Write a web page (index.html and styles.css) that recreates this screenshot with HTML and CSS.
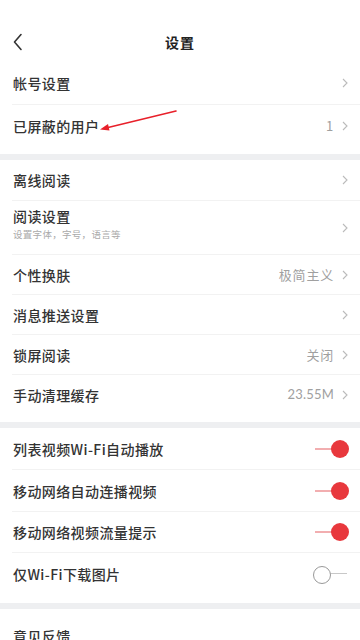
FILE: index.html
```html
<!DOCTYPE html>
<html lang="zh">
<head>
<meta charset="utf-8">
<link rel="stylesheet" href="styles.css">
</head>
<body>
<div class="page">
  <header class="header">
    <svg class="back" width="12" height="18" viewBox="0 0 12 18"><polyline points="9,1.5 2.5,9 9,16.5" fill="none" stroke="#333" stroke-width="1.6" stroke-linejoin="round" stroke-linecap="round"/></svg>
    <h1 class="title">设置</h1>
  </header>

  <section class="section s1">
    <div class="row h42"><span class="label">帐号设置</span><span class="right"><svg class="chev" width="6" height="10" viewBox="0 0 6 10"><polyline points="1,1 5,5 1,9" fill="none" stroke="#bbb" stroke-width="1.1"/></svg></span></div>
    <div class="row h42 blocked"><span class="label">已屏蔽的用户</span><span class="right"><span class="val">1</span><svg class="chev" width="6" height="10" viewBox="0 0 6 10"><polyline points="1,1 5,5 1,9" fill="none" stroke="#bbb" stroke-width="1.1"/></svg></span>
      <svg class="annot" width="80" height="24" viewBox="0 0 80 24"><line x1="78" y1="1" x2="8" y2="18" stroke="#e8202a" stroke-width="1.6" stroke-linecap="round"/><polygon points="2,19.5 10,14 11.5,20.5" fill="#e8202a"/></svg>
    </div>
  </section>
  <div class="band"></div>

  <section class="section s2">
    <div class="row h40"><span class="label">离线阅读</span><span class="right"><svg class="chev" width="6" height="10" viewBox="0 0 6 10"><polyline points="1,1 5,5 1,9" fill="none" stroke="#bbb" stroke-width="1.1"/></svg></span></div>
    <div class="row h54"><span class="stack"><span class="label">阅读设置</span><span class="sub">设置字体，字号，语言等</span></span><span class="right"><svg class="chev" width="6" height="10" viewBox="0 0 6 10"><polyline points="1,1 5,5 1,9" fill="none" stroke="#bbb" stroke-width="1.1"/></svg></span></div>
    <div class="row h40"><span class="label">个性换肤</span><span class="right"><span class="val">极简主义</span><svg class="chev" width="6" height="10" viewBox="0 0 6 10"><polyline points="1,1 5,5 1,9" fill="none" stroke="#bbb" stroke-width="1.1"/></svg></span></div>
    <div class="row h40"><span class="label">消息推送设置</span><span class="right"><svg class="chev" width="6" height="10" viewBox="0 0 6 10"><polyline points="1,1 5,5 1,9" fill="none" stroke="#bbb" stroke-width="1.1"/></svg></span></div>
    <div class="row h40"><span class="label">锁屏阅读</span><span class="right"><span class="val">关闭</span><svg class="chev" width="6" height="10" viewBox="0 0 6 10"><polyline points="1,1 5,5 1,9" fill="none" stroke="#bbb" stroke-width="1.1"/></svg></span></div>
    <div class="row h40"><span class="label">手动清理缓存</span><span class="right"><span class="val latin">23.55M</span><svg class="chev" width="6" height="10" viewBox="0 0 6 10"><polyline points="1,1 5,5 1,9" fill="none" stroke="#bbb" stroke-width="1.1"/></svg></span></div>
  </section>
  <div class="band"></div>

  <section class="section s3">
    <div class="row h41"><span class="label">列表视频Wi-Fi自动播放</span><span class="toggle on"></span></div>
    <div class="row h42"><span class="label">移动网络自动连播视频</span><span class="toggle on"></span></div>
    <div class="row h41"><span class="label">移动网络视频流量提示</span><span class="toggle on"></span></div>
    <div class="row h42"><span class="label">仅Wi-Fi下载图片</span><span class="toggle off"></span></div>
  </section>
  <div class="band"></div>

  <section class="section s4">
    <div class="row h54"><span class="label">意见反馈</span></div>
  </section>
</div>
</body>
</html>
```

FILE: styles.css
```css
* { box-sizing: border-box; }
html, body { margin: 0; padding: 0; background: #fff; }
body {
  font-family: "Noto Sans CJK SC", "Noto Sans", sans-serif;
  color: #333;
  width: 360px;
  height: 640px;
  overflow: hidden;
}
.page { width: 360px; }

.header {
  height: 62px;
  position: relative;
  display: flex;
  align-items: flex-start;
  justify-content: center;
  padding-top: 35px;
}
.back { position: absolute; left: 12px; top: 33px; }
.title {
  margin: 0;
  font-size: 14px;
  font-weight: 700;
  letter-spacing: 1px;
  color: #222;
  line-height: 1;
}

.section { background: #fff; }
.s1, .s2 { padding-bottom: 8px; }
.s3 { padding-bottom: 9px; }

.band { height: 6px; background: #eeeff1; }

.row {
  display: flex;
  align-items: center;
  justify-content: space-between;
  margin-left: 12px;
  padding-left: 1px;
  padding-right: 12px;
  border-top: 1px solid #f2f2f2;
  position: relative;
}
.section > .row:first-child { border-top: none; }
.h40 { height: 40px; }
.h41 { height: 41px; }
.h42 { height: 42px; }
.h54 { height: 54px; }

.label {
  font-size: 14px;
  font-weight: 500;
  letter-spacing: 0.4px;
  color: #333;
  line-height: 1;
}
.stack { display: flex; flex-direction: column; gap: 7px; padding-bottom: 6px; }
.sub { font-size: 9.5px; color: #aaa; letter-spacing: 0.3px; line-height: 1; }

.right { display: flex; align-items: center; gap: 8px; }
.val { font-size: 13px; color: #a0a0a0; letter-spacing: 0.8px; line-height: 1; }
.val.latin { font-family: "Lato", "Liberation Sans", sans-serif; font-size: 13px; letter-spacing: 0.2px; }
.chev { display: block; }

.annot { position: absolute; left: 86px; top: 5px; }

.toggle { position: relative; width: 36px; height: 18px; margin-right: -1px; }
.toggle.on::before {
  content: ""; position: absolute; left: 2px; top: 8px; width: 20px; height: 2px; background: #f2aeb0;
}
.toggle.on::after {
  content: ""; position: absolute; right: 0; top: 0; width: 18px; height: 18px; border-radius: 50%; background: #e8383d;
}
.toggle.off::before {
  content: ""; position: absolute; left: 10px; top: 8px; width: 24px; height: 1.5px; background: #c8c8c8;
}
.toggle.off::after {
  content: ""; position: absolute; left: 0; top: 1px; width: 16px; height: 16px; border-radius: 50%; border: 1.6px solid #999; background: #fff;
}
```
